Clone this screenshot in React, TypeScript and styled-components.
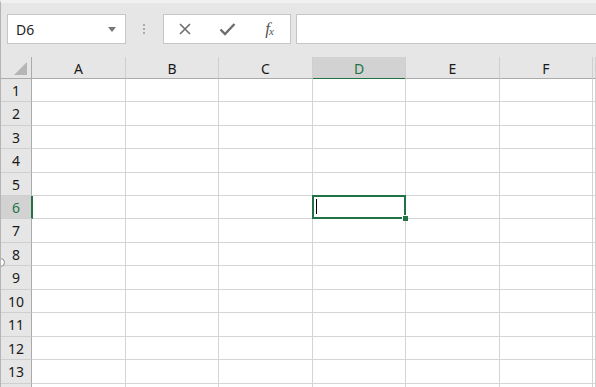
import React from 'react';
import styled, { createGlobalStyle } from 'styled-components';

const GlobalStyle = createGlobalStyle`
  html, body {
    margin: 0;
    padding: 0;
    background: #e6e6e6;
  }
  * {
    box-sizing: border-box;
  }
`;

const COLS = ['A', 'B', 'C', 'D', 'E', 'F', 'G'];
const COL_TEMPLATE = '31px 94px 93px 94px 93px 94px 93px 1fr';
const ROW_HEIGHTS = [23, 24, 23, 24, 23, 23, 24, 23, 24, 23, 24, 23, 24, 24];
const VISIBLE_LABELS = 13;
const SELECTED_COL = 'D';
const SELECTED_ROW = 6;

const Window = styled.div`
  width: 596px;
  height: 387px;
  overflow: hidden;
  position: relative;
  background: #e6e6e6;
  border-top: 3px solid #f1f1f1;
  border-left: 1px solid #b4b4b4;
  font-family: 'Noto Sans', 'Open Sans', Arial, sans-serif;
`;

const FormulaBar = styled.div`
  display: flex;
  align-items: center;
  height: 30px;
  margin-top: 11px;
  padding-left: 6px;
`;

const NameBox = styled.div`
  width: 119px;
  height: 30px;
  background: #fff;
  border: 1px solid #c6c6c6;
  display: flex;
  align-items: center;
  justify-content: space-between;
  padding: 0 9px 0 8px;
  font-size: 14px;
  color: #1f1f1f;
`;

const Caret = styled.span`
  width: 0;
  height: 0;
  border-left: 4.5px solid transparent;
  border-right: 4.5px solid transparent;
  border-top: 5px solid #777;
`;

const Grip = styled.div`
  width: 37px;
  padding-right: 2px;
  display: flex;
  flex-direction: column;
  align-items: center;
  gap: 2px;
`;

const Dot = styled.span`
  width: 2px;
  height: 2px;
  background: #aaa;
`;

const FuncGroup = styled.div`
  width: 128px;
  height: 30px;
  background: #fff;
  border: 1px solid #c6c6c6;
  display: flex;
  align-items: center;
  gap: 12px;
  padding-left: 6px;
`;

const FuncButton = styled.div`
  width: 30px;
  display: flex;
  justify-content: center;
  align-items: center;
  color: #6a6a6a;
`;

const Fx = styled.span`
  font-family: 'Liberation Serif', 'Times New Roman', serif;
  font-style: italic;
  font-size: 17px;
  color: #555;
  letter-spacing: -1px;
  sub {
    font-size: 11px;
    vertical-align: -1px;
  }
`;

const FormulaInput = styled.div`
  flex: 1;
  height: 30px;
  margin-left: 5px;
  background: #fff;
  border: 1px solid #c6c6c6;
  border-right: none;
`;

const Sheet = styled.div`
  margin-top: 13px;
  display: grid;
  grid-template-columns: ${COL_TEMPLATE};
  grid-template-rows: 22px ${ROW_HEIGHTS.map((h) => `${h}px`).join(' ')};
`;

const Corner = styled.div`
  position: relative;
  border-right: 1px solid #ababab;
  border-bottom: 1px solid #ababab;
`;

const CornerTriangle = styled.span`
  position: absolute;
  right: 4px;
  bottom: 3px;
  width: 0;
  height: 0;
  border-left: 13px solid transparent;
  border-bottom: 13px solid #b5b5b5;
`;

const ColHeader = styled.div<{ $active?: boolean }>`
  display: flex;
  align-items: center;
  justify-content: center;
  font-size: 14px;
  color: ${(p) => (p.$active ? '#217346' : '#1a1a1a')};
  background: ${(p) => (p.$active ? '#d2d2d2' : '#e6e6e6')};
  border-right: 1px solid #cfcfcf;
  border-bottom: ${(p) => (p.$active ? '2px solid #217346' : '1px solid #ababab')};
  margin-bottom: ${(p) => (p.$active ? '-1px' : '0')};
  padding-top: 1px;
`;

const RowHeader = styled.div<{ $active?: boolean }>`
  display: flex;
  align-items: center;
  justify-content: center;
  font-size: 14px;
  color: ${(p) => (p.$active ? '#217346' : '#1a1a1a')};
  background: ${(p) => (p.$active ? '#d2d2d2' : '#e6e6e6')};
  border-bottom: 1px solid #cfcfcf;
  border-right: ${(p) => (p.$active ? '2px solid #217346' : '1px solid #ababab')};
  margin-right: ${(p) => (p.$active ? '-1px' : '0')};
  position: relative;
  z-index: ${(p) => (p.$active ? 1 : 0)};
`;

const Cell = styled.div`
  position: relative;
  background: #fff;
  border-right: 1px solid #d4d4d4;
  border-bottom: 1px solid #d4d4d4;
`;

const Selection = styled.div`
  position: absolute;
  left: -1px;
  top: -1px;
  right: -1px;
  bottom: -1px;
  border: 2px solid #217346;
  z-index: 2;
`;

const FillHandle = styled.span`
  position: absolute;
  right: -4px;
  bottom: -4px;
  width: 6px;
  height: 6px;
  background: #217346;
  border-left: 1px solid #fff;
  border-top: 1px solid #fff;
`;

const TextCursor = styled.span`
  position: absolute;
  left: 2px;
  top: 2px;
  width: 1px;
  height: 15px;
  background: #000;
`;

const EdgeHandle = styled.span`
  position: absolute;
  left: -5px;
  top: 255px;
  width: 9px;
  height: 9px;
  border-radius: 50%;
  background: #fff;
  border: 1px solid #8a8a8a;
  z-index: 3;
`;

const CrossIcon = () => (
  <svg width="14" height="14" viewBox="0 0 14 14">
    <path d="M2 2 L12 12 M12 2 L2 12" stroke="#6e6e6e" strokeWidth="1.6" fill="none" />
  </svg>
);

const CheckIcon = () => (
  <svg width="17" height="14" viewBox="0 0 17 14">
    <path d="M1.5 7.5 L6 12 L15.5 2" stroke="#6e6e6e" strokeWidth="2.4" fill="none" />
  </svg>
);

const App: React.FC = () => {
  const rows = ROW_HEIGHTS.map((_, i) => i + 1);
  return (
    <>
      <GlobalStyle />
      <Window>
        <FormulaBar>
          <NameBox>
            <span>D6</span>
            <Caret />
          </NameBox>
          <Grip>
            <Dot />
            <Dot />
            <Dot />
          </Grip>
          <FuncGroup>
            <FuncButton>
              <CrossIcon />
            </FuncButton>
            <FuncButton>
              <CheckIcon />
            </FuncButton>
            <FuncButton>
              <Fx>
                f<sub>x</sub>
              </Fx>
            </FuncButton>
          </FuncGroup>
          <FormulaInput />
        </FormulaBar>
        <Sheet>
          <Corner>
            <CornerTriangle />
          </Corner>
          {COLS.map((c) => (
            <ColHeader key={c} $active={c === SELECTED_COL}>
              {c === 'G' ? '' : c}
            </ColHeader>
          ))}
          {rows.map((r) => (
            <React.Fragment key={r}>
              <RowHeader $active={r === SELECTED_ROW}>{r <= VISIBLE_LABELS ? r : ''}</RowHeader>
              {COLS.map((c) => (
                <Cell key={c}>
                  {r === SELECTED_ROW && c === SELECTED_COL && (
                    <Selection>
                      <TextCursor />
                      <FillHandle />
                    </Selection>
                  )}
                </Cell>
              ))}
            </React.Fragment>
          ))}
        </Sheet>
        <EdgeHandle />
      </Window>
    </>
  );
};

export default App;
